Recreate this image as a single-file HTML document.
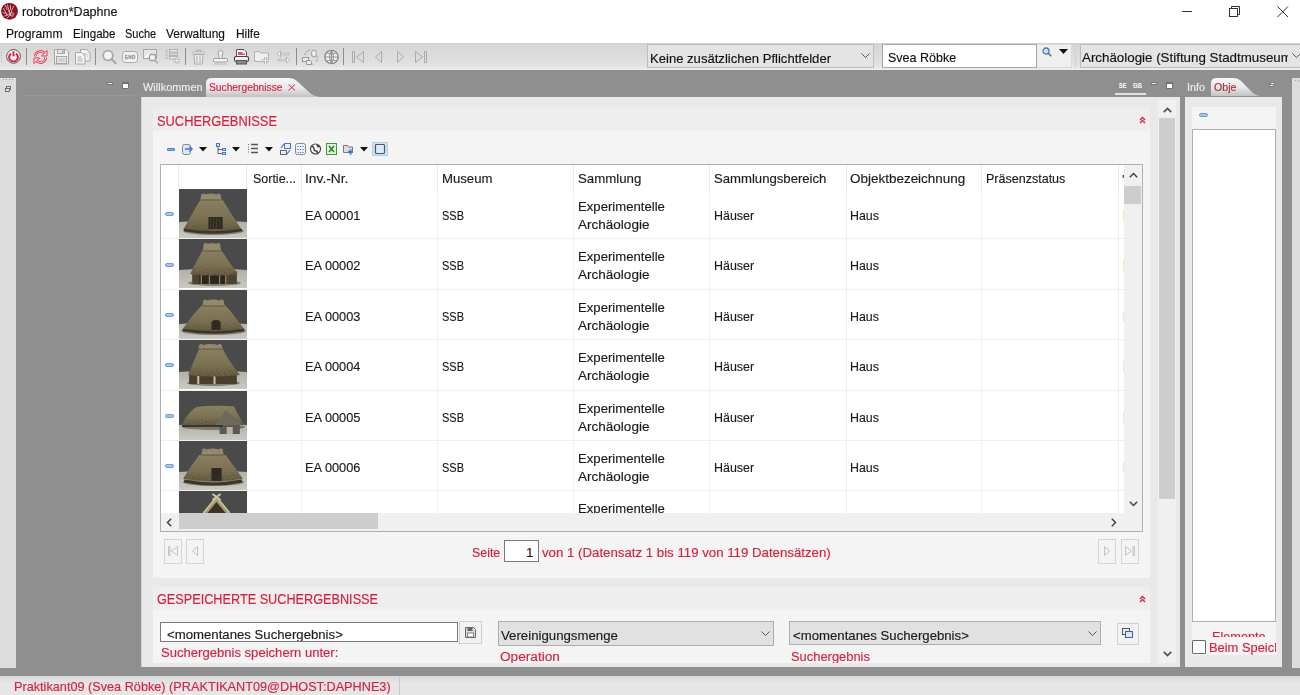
<!DOCTYPE html><html><head><meta charset="utf-8"><style>
html,body{margin:0;padding:0;}
body{width:1300px;height:695px;overflow:hidden;position:relative;background:#8f8f8f;font-family:"Liberation Sans",sans-serif;}
.t{position:absolute;white-space:nowrap;transform-origin:0 0;-webkit-text-stroke:0.15px currentColor;}
.b{position:absolute;box-sizing:border-box;}
svg.b{overflow:visible}
</style></head><body>
<div class="b" style="left:0px;top:0px;width:1300px;height:43px;background:#fff"></div>
<svg class="b" style="left:0px;top:0px;" width="20" height="20" viewBox="0 0 20 20"><circle cx="9.5" cy="11.3" r="8.4" fill="#8c1420"/><g stroke="#f1d8da" stroke-width=".9" fill="none" stroke-linecap="round" opacity=".85"><path d="M3.5 8.5l3 5.5M5.5 5.5l1.5 4M7.5 5l1 4.5 2 5M10.5 5.5v3.5l-2 3M13.5 6.5l-1.5 3-1 3.5M3 12.5q3 0 5 3M4.5 16q3-2 6-1.5M7 18q2-3 5-3M9.5 13.5q2-1 4-.5M12 17l2-3"/></g></svg>
<div class="t" style="left:21.5px;top:5.29px;font-size:12.5px;line-height:14.36px;color:#111;transform:scaleX(1.0031);">robotron*Daphne</div>
<div class="b" style="left:1182px;top:11px;width:10px;height:1px;background:#333"></div>
<svg class="b" style="left:1229px;top:6px;" width="12" height="12" viewBox="0 0 12 12"><rect x="0.5" y="2.5" width="8" height="8" fill="none" stroke="#333"/><path d="M2.5 2.5V0.5h8v8h-2" fill="none" stroke="#333"/></svg>
<svg class="b" style="left:1277px;top:6px;" width="12" height="12" viewBox="0 0 12 12"><path d="M0.5 0.5L11 11M11 0.5L0.5 11" stroke="#333" stroke-width="1"/></svg>
<div class="t" style="left:5.5px;top:27.85px;font-size:12.1px;line-height:13.90px;color:#111;transform:scaleX(1.0005);">Programm</div>
<div class="t" style="left:72.5px;top:27.85px;font-size:12.1px;line-height:13.90px;color:#111;transform:scaleX(0.9571);">Eingabe</div>
<div class="t" style="left:124.8px;top:27.85px;font-size:12.1px;line-height:13.90px;color:#111;transform:scaleX(0.9094);">Suche</div>
<div class="t" style="left:166.4px;top:27.85px;font-size:12.1px;line-height:13.90px;color:#111;transform:scaleX(0.9856);">Verwaltung</div>
<div class="t" style="left:236.2px;top:27.85px;font-size:12.1px;line-height:13.90px;color:#111;transform:scaleX(0.9832);">Hilfe</div>
<div class="b" style="left:0px;top:43px;width:1300px;height:27px;background:linear-gradient(#d0d0d0,#d6d6d6 8%,#e2e2e2 85%,#ececec 92%,#ececec)"></div>
<div class="b" style="left:1px;top:52px;width:1px;height:1px;background:#c2b48f"></div>
<div class="b" style="left:1px;top:55px;width:1px;height:1px;background:#c2b48f"></div>
<div class="b" style="left:1px;top:58px;width:1px;height:1px;background:#c2b48f"></div>
<div class="b" style="left:1px;top:61px;width:1px;height:1px;background:#c2b48f"></div>
<div class="b" style="left:26px;top:48px;width:1px;height:17px;background:#8c8c8c"></div>
<div class="b" style="left:95px;top:48px;width:1px;height:17px;background:#8c8c8c"></div>
<div class="b" style="left:185px;top:48px;width:1px;height:17px;background:#8c8c8c"></div>
<div class="b" style="left:296px;top:48px;width:1px;height:17px;background:#8c8c8c"></div>
<div class="b" style="left:343px;top:48px;width:1px;height:17px;background:#8c8c8c"></div>
<svg class="b" style="left:6px;top:49px;" width="16" height="16" viewBox="0 0 16 16"><circle cx="7.5" cy="7.4" r="6.9" fill="#f2f2f2" stroke="#5a5a5a" stroke-width="1"/><path d="M5 4.6a4.4 4.4 0 1 0 5 0" fill="none" stroke="#dc2440" stroke-width="2"/><path d="M7.5 2.3v5" stroke="#dc2440" stroke-width="2"/></svg>
<svg class="b" style="left:33px;top:49px;" width="15" height="16" viewBox="0 0 15 16"><g fill="none" stroke="#e23a55" stroke-width="2.6"><path d="M2.3 7.5a5.2 5.2 0 0 1 9-3.4M12.7 8.5a5.2 5.2 0 0 1-9 3.4"/></g><g fill="none" stroke="#fbe9ec" stroke-width="0.9"><path d="M2.3 7.5a5.2 5.2 0 0 1 9-3.4M12.7 8.5a5.2 5.2 0 0 1-9 3.4"/></g><path d="M14 1.5v5.5H8.5z" fill="#fbe9ec" stroke="#e23a55"/><path d="M1 14.5V9h5.5z" fill="#fbe9ec" stroke="#e23a55"/></svg>
<svg class="b" style="left:54px;top:49px;" width="15" height="16" viewBox="0 0 15 16"><path d="M0.5 0.5h11.5l2.5 2.5v12H0.5z" fill="#f0f0f0" stroke="#a3a3a3"/><rect x="3.5" y="0.5" width="7" height="4" fill="#e2e2e2" stroke="#a3a3a3"/><rect x="8" y="1.5" width="1.5" height="2" fill="#999"/><rect x="2.5" y="7.5" width="10" height="7" fill="#e8e8e8" stroke="#a3a3a3"/><path d="M4 10h7M4 12h7" stroke="#bbb"/></svg>
<svg class="b" style="left:75px;top:49px;" width="16" height="16" viewBox="0 0 16 16"><path d="M5.5 0.5h6l3.5 3.5v8h-9.5z" fill="#f2f2f2" stroke="#a8a8a8"/><path d="M0.5 3.5h6l3.5 3.5v8H0.5z" fill="#f4f4f4" stroke="#a8a8a8"/><path d="M2.5 8h4M2.5 10h5M2.5 12h5M8 5h4M12 7h1" stroke="#b0b0b0"/></svg>
<svg class="b" style="left:102px;top:49px;" width="15" height="16" viewBox="0 0 15 16"><circle cx="6" cy="6.5" r="4.8" fill="#f4f4f4" stroke="#a8a8a8" stroke-width="1.8"/><path d="M9.5 10l4 4" stroke="#a8a8a8" stroke-width="2.4" stroke-linecap="round"/></svg>
<svg class="b" style="left:122px;top:51px;" width="16" height="12" viewBox="0 0 16 12"><rect x="0.5" y="0.5" width="15" height="11" rx="3" fill="#f2f2f2" stroke="#a8a8a8"/><path d="M5.3 4.2h-1.8v3.6h1.8v-1.6h-1M7 7.8V4.2l2 3.6V4.2M10.7 4.2v3.6h1q1.3 0 1.3-1.8t-1.3-1.8z" fill="none" stroke="#888" stroke-width=".9"/></svg>
<svg class="b" style="left:143px;top:49px;" width="17" height="16" viewBox="0 0 17 16"><rect x="0.5" y="0.5" width="13" height="9" fill="#e6e6e6" stroke="#a8a8a8"/><path d="M1 9l5-5 3 3" fill="#fff" stroke="none"/><rect x="6.5" y="5.5" width="6" height="6" rx="1.5" fill="#f4f4f4" stroke="#a0a0a0" stroke-width="1.3"/><path d="M12 11.5l3 3" stroke="#a8a8a8" stroke-width="1.4"/></svg>
<svg class="b" style="left:165px;top:49px;" width="16" height="16" viewBox="0 0 16 16"><circle cx="1.5" cy="2" r="1" fill="#ddd" stroke="#aaa" stroke-width=".6"/><circle cx="1.5" cy="5.5" r="1" fill="#ddd" stroke="#aaa" stroke-width=".6"/><circle cx="1.5" cy="9" r="1" fill="#ddd" stroke="#aaa" stroke-width=".6"/><rect x="4.5" y="0.5" width="8" height="2.5" fill="#e8e8e8" stroke="#aaa" stroke-width=".8"/><rect x="4.5" y="4" width="8" height="2.5" fill="#d8d8d8" stroke="#aaa" stroke-width=".8"/><rect x="4.5" y="7.5" width="8" height="2.5" fill="#e8e8e8" stroke="#aaa" stroke-width=".8"/><path d="M12 8.5v6.5M8.5 11.7h7" stroke="#aaa" stroke-width="2.6"/><path d="M12 8.5v6.5M8.5 11.7h7" stroke="#f6f6f6" stroke-width="1"/></svg>
<svg class="b" style="left:192px;top:49px;" width="14" height="16" viewBox="0 0 14 16"><rect x="0.5" y="3" width="12" height="2" rx="1" fill="#eee" stroke="#aaa" stroke-width=".8"/><path d="M4.5 3V1.2h4V3" fill="none" stroke="#aaa"/><path d="M2 5.5h9l-0.8 9.5H2.8z" fill="#f0f0f0" stroke="#aaa"/><path d="M5 6.5v7.5M8 6.5v7.5" stroke="#aaa"/></svg>
<svg class="b" style="left:213px;top:49px;" width="15" height="16" viewBox="0 0 15 16"><path d="M5 4a2.5 2.5 0 1 1 5 0l-1 3v2.5h-3V7z" fill="#eee" stroke="#a0a0a0"/><rect x="0.5" y="9.5" width="14" height="3.5" rx="1" fill="#f2f2f2" stroke="#a0a0a0"/><path d="M1 15h13" stroke="#bbb"/></svg>
<svg class="b" style="left:234px;top:49px;" width="15" height="16" viewBox="0 0 15 16"><path d="M2.5 8V0.5h7.5l2.5 2.5V8" fill="#fafafa" stroke="#555"/><path d="M4 3h4l1 1.5H11V6H4z" fill="#e8506a"/><rect x="0.5" y="7.5" width="14" height="5" rx="1.5" fill="#f0f0f0" stroke="#444" stroke-width="1.2"/><rect x="2.5" y="11.5" width="10" height="3.5" fill="#8a8a8a" stroke="#555"/></svg>
<svg class="b" style="left:254px;top:49px;" width="16" height="16" viewBox="0 0 16 16"><path d="M0.5 2.5h5l1.5 1.5H14.5v8.5H0.5z" fill="#efefef" stroke="#b0b0b0"/><path d="M11.5 8v7M8 11.5h7" stroke="#aaa" stroke-width="2.6"/><path d="M11.5 8v7M8 11.5h7" stroke="#f6f6f6" stroke-width="1"/></svg>
<svg class="b" style="left:276px;top:49px;" width="15" height="16" viewBox="0 0 15 16"><path d="M4.5 2L1 5l3.5 3z M10.5 8L14 11l-3.5 3z" fill="#f2f2f2" stroke="#aaa" stroke-width=".8"/><path d="M4.5 4.2h8.5v1.6H4.5zM2 10.2h8.5v1.6H2z" fill="#eee" stroke="#aaa" stroke-width=".7"/></svg>
<svg class="b" style="left:302px;top:49px;" width="17" height="16" viewBox="0 0 17 16"><path d="M3 6a6 6 0 0 1 5-5M15 7a6 6 0 0 1-1 6M11 15a6 6 0 0 1-4 0" fill="none" stroke="#aaa" stroke-width="1.3" stroke-dasharray="2 1"/><rect x="0.5" y="8.5" width="6" height="4" fill="#eee" stroke="#999"/><path d="M4.5 11.5h4l1 1v3h-5z" fill="#eee" stroke="#999"/><ellipse cx="12" cy="4.5" rx="2.5" ry="3.5" fill="#eee" stroke="#999"/></svg>
<svg class="b" style="left:324px;top:49px;" width="15" height="16" viewBox="0 0 15 16"><circle cx="7.5" cy="8" r="6.6" fill="#f4f4f4" stroke="#8a8a8a" stroke-width="1.4"/><path d="M1 8h13M7.5 1.4v13.2M2.8 4q4.7 2.4 9.4 0M2.8 12q4.7-2.4 9.4 0M7.5 1.4q-4 6.6 0 13.2M7.5 1.4q4 6.6 0 13.2" fill="none" stroke="#8a8a8a" stroke-width=".9"/></svg>
<svg class="b" style="left:351px;top:49px;" width="14" height="16" viewBox="0 0 14 16"><path d="M1.5 2.5v11h2v-11z" fill="none" stroke="#aaa"/><path d="M12.5 2.5L5.5 8l7 5.5z" fill="none" stroke="#aaa"/></svg>
<svg class="b" style="left:374px;top:49px;" width="9" height="16" viewBox="0 0 9 16"><path d="M7.5 2.5L1.5 8l6 5.5z" fill="none" stroke="#aaa"/></svg>
<svg class="b" style="left:396px;top:49px;" width="9" height="16" viewBox="0 0 9 16"><path d="M1.5 2.5L7.5 8l-6 5.5z" fill="none" stroke="#aaa"/></svg>
<svg class="b" style="left:414px;top:49px;" width="14" height="16" viewBox="0 0 14 16"><path d="M1.5 2.5L8.5 8l-7 5.5z" fill="none" stroke="#aaa"/><path d="M10.5 2.5v11h2v-11z" fill="none" stroke="#aaa"/></svg>
<div class="b" style="left:647px;top:44px;width:227px;height:24px;background:#e4e4e4;border:1px solid #bdbdbd"></div>
<div class="t" style="left:650px;top:51.73px;font-size:13px;line-height:14.94px;color:#111;transform:scaleX(1.0060);">Keine zusätzlichen Pflichtfelder</div>
<svg class="b" style="left:861px;top:53px;" width="9" height="5" viewBox="0 0 9 5"><path d="M0.5 0.5l4 4 4-4" fill="none" stroke="#555" stroke-width="1"/></svg>
<div class="b" style="left:882px;top:44px;width:155px;height:24px;background:#fff;border:1px solid #a6a6a6"></div>
<div class="t" style="left:887.8px;top:50.84px;font-size:13px;line-height:14.94px;color:#111;transform:scaleX(0.9630);">Svea Röbke</div>
<div class="b" style="left:1037px;top:44px;width:35px;height:24px;background:#efefef;border:1px solid #dadada;border-left:0"></div>
<svg class="b" style="left:1042px;top:47px;" width="10" height="10" viewBox="0 0 10 10"><circle cx="4" cy="4" r="3" fill="#cfe0f5" stroke="#4a78b8" stroke-width="1.3"/><path d="M6.3 6.3l3 3" stroke="#666" stroke-width="1.5"/></svg>
<svg class="b" style="left:1059px;top:49px;" width="9" height="5" viewBox="0 0 9 5"><path d="M0 0h9L4.5 5z" fill="#111"/></svg>
<div class="b" style="left:1075px;top:44px;width:1px;height:24px;background:#d0d0d0"></div>
<div class="b" style="left:1080px;top:44px;width:230px;height:24px;background:#e4e4e4;border:1px solid #bdbdbd"></div>
<div class="b" style="left:1080px;top:44px;width:208px;height:24px;overflow:hidden">
<div class="t" style="left:2.4px;top:6.04px;font-size:13.1px;line-height:15.05px;color:#111;transform:scaleX(1.0191);">Archäologie (Stiftung Stadtmuseum</div>
</div>
<svg class="b" style="left:1292px;top:53px;" width="9" height="5" viewBox="0 0 9 5"><path d="M0.5 0.5l4 4 4-4" fill="none" stroke="#555" stroke-width="1"/></svg>
<div class="b" style="left:0px;top:78px;width:16px;height:590px;background:#dcdcdc"></div>
<div class="b" style="left:3px;top:79px;width:1px;height:1px;background:#a89f8a"></div>
<div class="b" style="left:6px;top:79px;width:1px;height:1px;background:#a89f8a"></div>
<div class="b" style="left:9px;top:79px;width:1px;height:1px;background:#a89f8a"></div>
<div class="b" style="left:12px;top:79px;width:1px;height:1px;background:#a89f8a"></div>
<svg class="b" style="left:5px;top:86px;" width="6" height="6" viewBox="0 0 6 6"><rect x="1.5" y="0.5" width="4" height="3" fill="#ddd" stroke="#555" stroke-width=".8"/><rect x="0.5" y="2.5" width="4" height="3" fill="#ddd" stroke="#555" stroke-width=".8"/></svg>
<div class="b" style="left:106.5px;top:81.5px;width:6.5px;height:3.5px;background:#f6f6f6;border:1px solid #6f6f6f;border-radius:1px"></div>
<div class="b" style="left:122px;top:81.5px;width:7px;height:7px;background:#fff;border:1px solid #6f6f6f;border-top:2px solid #6f6f6f;border-radius:1px"></div>
<div class="b" style="left:24px;top:95px;width:116px;height:1px;background:#979797"></div>
<div class="t" style="left:142.6px;top:80.84px;font-size:11px;line-height:12.64px;color:#eeeeee;transform:scaleX(0.9968);">Willkommen</div>
<svg class="b" style="left:206px;top:78px;" width="114" height="19" viewBox="0 0 114 19"><defs><linearGradient id="tg" x1="0" y1="0" x2="0" y2="1"><stop offset="0" stop-color="#f7f7f7"/><stop offset="0.55" stop-color="#e6e6e6"/><stop offset="1" stop-color="#c2c2c2"/></linearGradient></defs><path d="M0 19V5Q0 0 6 0H83Q88 0 92 4L104 15Q108 18.5 114 19Z" fill="url(#tg)"/></svg>
<div class="t" style="left:208.8px;top:81.05px;font-size:11px;line-height:12.64px;color:#d8203c;transform:scaleX(0.9318);">Suchergebnisse</div>
<svg class="b" style="left:288px;top:84px;" width="8" height="7" viewBox="0 0 8 7"><path d="M0.5 0.5l6.5 6M7 0.5l-6.5 6" stroke="#d8203c" stroke-width="1"/></svg>
<div class="t" style="left:1118.5px;top:82.21px;font-size:7.5px;line-height:8.62px;color:#f5f5f5;transform:scaleX(0.7496);font-weight:bold;">SE</div>
<div class="t" style="left:1133px;top:82.21px;font-size:7.5px;line-height:8.62px;color:#f5f5f5;transform:scaleX(0.8305);font-weight:bold;">GS</div>
<div class="b" style="left:1115px;top:93px;width:31px;height:2px;background:#e2e2e2"></div>
<div class="b" style="left:1150.5px;top:81.5px;width:6.5px;height:3.5px;background:#f6f6f6;border:1px solid #6f6f6f;border-radius:1px"></div>
<div class="b" style="left:1165.5px;top:81.5px;width:7px;height:7px;background:#fff;border:1px solid #6f6f6f;border-top:2px solid #6f6f6f;border-radius:1px"></div>
<div class="b" style="left:141px;top:97px;width:1039px;height:570px;background:#e9e9e9;border-left:1px solid #d4d4d4"></div>
<div class="b" style="left:153px;top:108px;width:997px;height:23px;background:#eeeeee"></div>
<div class="b" style="left:153px;top:131px;width:997px;height:447px;background:#f4f4f4"></div>
<div class="t" style="left:157px;top:111.92px;font-size:15px;line-height:17.23px;color:#d8203c;transform:scaleX(0.8569);">SUCHERGEBNISSE</div>
<svg class="b" style="left:1139px;top:116px;" width="7" height="8" viewBox="0 0 7 8"><path d="M1 4L3.5 1.5L6 4M1 7L3.5 4.5L6 7" fill="none" stroke="#d8203c" stroke-width="1.3"/></svg>
<div class="b" style="left:167px;top:148px;width:8px;height:3px;background:#8db3e6;border:1px solid #4a7fcb;border-radius:1px"></div>
<svg class="b" style="left:182px;top:143px;" width="11" height="12" viewBox="0 0 11 12"><rect x="0.5" y="1.5" width="8" height="10" rx="2" fill="#dde6f0" stroke="#7d8a99"/><path d="M3 6h7M7.5 3.5l2.5 2.5-2.5 2.5" fill="none" stroke="#3f7ad0" stroke-width="1.5"/></svg>
<svg class="b" style="left:199px;top:147px;" width="8" height="5" viewBox="0 0 8 5"><path d="M0 0h8L4 4.5z" fill="#111"/></svg>
<svg class="b" style="left:216px;top:143px;" width="10" height="12" viewBox="0 0 10 12"><rect x="0.5" y="0.5" width="3" height="3" fill="#cfe0f7" stroke="#3f7ad0"/><rect x="6.5" y="5.5" width="3" height="2" fill="#cfe0f7" stroke="#3f7ad0"/><rect x="6.5" y="9.5" width="3" height="2" fill="#cfe0f7" stroke="#3f7ad0"/><path d="M2 4v6.5h4.5M2 6.5h4.5" fill="none" stroke="#666"/></svg>
<svg class="b" style="left:232px;top:147px;" width="8" height="5" viewBox="0 0 8 5"><path d="M0 0h8L4 4.5z" fill="#111"/></svg>
<svg class="b" style="left:248px;top:143px;" width="10" height="12" viewBox="0 0 10 12"><path d="M0.5 1v10" stroke="#3f7ad0" stroke-dasharray="1 1.5"/><path d="M3 1.5h7M3 5.5h7M3 9.5h7" stroke="#555" stroke-width="1.3"/></svg>
<svg class="b" style="left:265px;top:147px;" width="8" height="5" viewBox="0 0 8 5"><path d="M0 0h8L4 4.5z" fill="#111"/></svg>
<svg class="b" style="left:280px;top:143px;" width="11" height="12" viewBox="0 0 11 12"><rect x="4.5" y="0.5" width="6" height="5" fill="#e5eefa" stroke="#3f7ad0"/><rect x="0.5" y="7.5" width="6" height="4" fill="#eee" stroke="#666"/><path d="M1 5l3-4M7 11l3-4" stroke="#3f7ad0" stroke-width="1.2"/></svg>
<svg class="b" style="left:295px;top:143px;" width="11" height="12" viewBox="0 0 11 12"><rect x="0.5" y="0.5" width="10" height="11" rx="2" fill="#f2f2f2" stroke="#888"/><path d="M3 3v1M5.5 3v1M8 3v1M3 6v1M5.5 6v1M8 6v1M3 9v1M5.5 9v1M8 9v1" stroke="#3f7ad0" stroke-width="1.3"/></svg>
<svg class="b" style="left:310px;top:143px;" width="11" height="12" viewBox="0 0 11 12"><circle cx="5.5" cy="6" r="5" fill="#fff" stroke="#444" stroke-width="1.2"/><path d="M2 3q2 1 2 3t2 2 1 3M7 1.5q0 2 2 2.5" fill="none" stroke="#444" stroke-width="1.5"/></svg>
<svg class="b" style="left:326px;top:143px;" width="11" height="12" viewBox="0 0 11 12"><rect x="0.5" y="0.5" width="10" height="11" fill="#e3f1df" stroke="#3a9a3a"/><path d="M3 3l5 6M8 3l-5 6" stroke="#2a8a2a" stroke-width="1.7"/></svg>
<svg class="b" style="left:343px;top:143px;" width="11" height="12" viewBox="0 0 11 12"><path d="M0.5 2.5h4l1 1.5h4v5.5h-9z" fill="#ddd" stroke="#777"/><path d="M7.5 6.5v5M5 9h5" stroke="#3f7ad0" stroke-width="2"/></svg>
<svg class="b" style="left:360px;top:147px;" width="8" height="5" viewBox="0 0 8 5"><path d="M0 0h8L4 4.5z" fill="#111"/></svg>
<div class="b" style="left:372px;top:142px;width:16px;height:14px;background:#cce4f7;border:1px solid #a8d0f0"></div>
<svg class="b" style="left:375px;top:144px;" width="10" height="10" viewBox="0 0 10 10"><rect x="0.5" y="0.5" width="9" height="9" rx="1" fill="#dbeafb" stroke="#555" stroke-width="1.2"/></svg>
<svg width="0" height="0" style="position:absolute"><defs><linearGradient id="thatch" x1="0" y1="0" x2="0" y2="1"><stop offset="0" stop-color="#8f8565"/><stop offset="0.6" stop-color="#7b6f51"/><stop offset="1" stop-color="#5a4f39"/></linearGradient><linearGradient id="gnd" x1="0" y1="0" x2="0" y2="1"><stop offset="0" stop-color="#b0afa6"/><stop offset="1" stop-color="#cacac2"/></linearGradient><filter id="nz" x="0" y="0" width="100%" height="100%"><feTurbulence type="fractalNoise" baseFrequency="0.8" numOctaves="2" seed="3" result="n"/><feColorMatrix in="n" type="matrix" values="0 0 0 0 0.2  0 0 0 0 0.18  0 0 0 0 0.1  0 0 0 2.2 -0.9" result="c"/><feComposite in="c" in2="SourceGraphic" operator="in" result="t"/><feMerge><feMergeNode in="SourceGraphic"/><feMergeNode in="t"/></feMerge></filter></defs></svg>
<div class="b" style="left:160px;top:164px;width:983px;height:368px;background:#fff;border:1px solid #a9b0ba"></div>
<div class="b" style="left:161px;top:165px;width:963px;height:348px;overflow:hidden">
<div class="b" style="left:17px;top:0px;width:1px;height:24px;background:#e9e9e9"></div>
<div class="b" style="left:85px;top:0px;width:1px;height:24px;background:#e9e9e9"></div>
<div class="b" style="left:140px;top:0px;width:1px;height:24px;background:#e9e9e9"></div>
<div class="b" style="left:276px;top:0px;width:1px;height:24px;background:#e9e9e9"></div>
<div class="b" style="left:412px;top:0px;width:1px;height:24px;background:#e9e9e9"></div>
<div class="b" style="left:548px;top:0px;width:1px;height:24px;background:#e9e9e9"></div>
<div class="b" style="left:685px;top:0px;width:1px;height:24px;background:#e9e9e9"></div>
<div class="b" style="left:820px;top:0px;width:1px;height:24px;background:#e9e9e9"></div>
<div class="b" style="left:957px;top:0px;width:1px;height:24px;background:#e9e9e9"></div>
<div class="t" style="left:92.4px;top:6.05px;font-size:13.2px;line-height:15.17px;color:#1a1a1a;transform:scaleX(0.9454);">Sortie...</div>
<div class="t" style="left:144px;top:6.05px;font-size:13.2px;line-height:15.17px;color:#1a1a1a;transform:scaleX(1.0467);">Inv.-Nr.</div>
<div class="t" style="left:280.5px;top:6.05px;font-size:13.2px;line-height:15.17px;color:#1a1a1a;transform:scaleX(0.9978);">Museum</div>
<div class="t" style="left:416.7px;top:6.05px;font-size:13.2px;line-height:15.17px;color:#1a1a1a;transform:scaleX(1.0033);">Sammlung</div>
<div class="t" style="left:553px;top:6.05px;font-size:13.2px;line-height:15.17px;color:#1a1a1a;transform:scaleX(0.9958);">Sammlungsbereich</div>
<div class="t" style="left:689px;top:6.05px;font-size:13.2px;line-height:15.17px;color:#1a1a1a;transform:scaleX(1.0212);">Objektbezeichnung</div>
<div class="t" style="left:825px;top:6.05px;font-size:13.2px;line-height:15.17px;color:#1a1a1a;transform:scaleX(0.9493);">Präsenzstatus</div>
<div class="t" style="left:961px;top:6.55px;font-size:13.2px;line-height:15.17px;color:#1a1a1a;">&#x27;</div>
<div class="b" style="left:0px;top:73px;width:963px;height:1px;background:#efefef"></div>
<div class="b" style="left:140px;top:24px;width:1px;height:49px;background:#f0f0f0"></div>
<div class="b" style="left:276px;top:24px;width:1px;height:49px;background:#f0f0f0"></div>
<div class="b" style="left:412px;top:24px;width:1px;height:49px;background:#f0f0f0"></div>
<div class="b" style="left:548px;top:24px;width:1px;height:49px;background:#f0f0f0"></div>
<div class="b" style="left:685px;top:24px;width:1px;height:49px;background:#f0f0f0"></div>
<div class="b" style="left:820px;top:24px;width:1px;height:49px;background:#f0f0f0"></div>
<div class="b" style="left:957px;top:24px;width:1px;height:49px;background:#f0f0f0"></div>
<svg class="b" style="left:18px;top:24px" width="68" height="49" viewBox="0 0 67 49" preserveAspectRatio="none"><rect width="67" height="49" fill="#4a4a4a"/><path d="M0 33Q33 30 67 33V49H0z" fill="url(#gnd)"/><ellipse cx="34" cy="42" rx="30" ry="4" fill="#3f3a30" opacity=".5"/><path d="M4 41C10 31 15 20 21 11Q32 9 43 11C49 20 55 31 62 41Q34 45 4 41Z" fill="url(#thatch)" filter="url(#nz)"/><path d="M21 11L22 5.5Q24 3.5 26 5.5Q31.5 3.5 37 5.5Q39 3.5 41 5.5L42 11Z" fill="#9a8f70" filter="url(#nz)"/><path d="M21 11H42" stroke="#5e5440" stroke-width="1"/><rect x="29" y="28" width="14" height="12" fill="#2f2a22"/><path d="M31 29v10M34 29v10M37 29v10M40 29v10" stroke="#4f4637" stroke-width=".7"/><path d="M5 41Q34 46 62 41" stroke="#3f3526" fill="none" stroke-width="2.5"/></svg>
<div class="b" style="left:4px;top:47px;width:9px;height:4px;background:#a6c6ef;border:1px solid #6a9ce0;border-radius:2px"></div>
<div class="t" style="left:144px;top:43.05px;font-size:13.2px;line-height:15.17px;color:#1a1a1a;transform:scaleX(0.9694);">EA 00001</div>
<div class="t" style="left:280.5px;top:43.05px;font-size:13.2px;line-height:15.17px;color:#1a1a1a;transform:scaleX(0.8329);">SSB</div>
<div class="t" style="left:416.7px;top:34.05px;font-size:13.2px;line-height:15.17px;color:#1a1a1a;transform:scaleX(0.9965);">Experimentelle</div>
<div class="t" style="left:416.7px;top:52.05px;font-size:13.2px;line-height:15.17px;color:#1a1a1a;transform:scaleX(1.0257);">Archäologie</div>
<div class="t" style="left:553px;top:43.05px;font-size:13.2px;line-height:15.17px;color:#1a1a1a;transform:scaleX(0.9448);">Häuser</div>
<div class="t" style="left:689px;top:43.05px;font-size:13.2px;line-height:15.17px;color:#1a1a1a;transform:scaleX(0.9411);">Haus</div>
<div class="b" style="left:962px;top:45px;width:1px;height:11px;background:#f9e2bb"></div>
<div class="b" style="left:0px;top:124px;width:963px;height:1px;background:#efefef"></div>
<div class="b" style="left:140px;top:74px;width:1px;height:50px;background:#f0f0f0"></div>
<div class="b" style="left:276px;top:74px;width:1px;height:50px;background:#f0f0f0"></div>
<div class="b" style="left:412px;top:74px;width:1px;height:50px;background:#f0f0f0"></div>
<div class="b" style="left:548px;top:74px;width:1px;height:50px;background:#f0f0f0"></div>
<div class="b" style="left:685px;top:74px;width:1px;height:50px;background:#f0f0f0"></div>
<div class="b" style="left:820px;top:74px;width:1px;height:50px;background:#f0f0f0"></div>
<div class="b" style="left:957px;top:74px;width:1px;height:50px;background:#f0f0f0"></div>
<svg class="b" style="left:18px;top:74px" width="68" height="49" viewBox="0 0 67 49" preserveAspectRatio="none"><rect width="67" height="49" fill="#4a4a4a"/><path d="M0 31Q33 28 67 31V49H0z" fill="url(#gnd)"/><ellipse cx="35" cy="44" rx="26" ry="3" fill="#3f3a30" opacity=".5"/><rect x="13" y="32" width="44" height="13" fill="#4f4232"/><path d="M20 34h26v11H20z" fill="#2c261e"/><path d="M22 34v11M30 34v11M40 34v11M46 34v11" stroke="#8a7d60" stroke-width="1.3"/><path d="M11 35C15 27 19 19 23 12Q32 10 42 12C47 19 52 27 58 35Q34 38 11 35Z" fill="url(#thatch)" filter="url(#nz)"/><path d="M23.5 12L24.5 5Q26.5 3 28.5 5Q32.5 3 36.5 5Q38.5 3 40.5 5L41.5 12Z" fill="#9a8f70" filter="url(#nz)"/><path d="M23.5 12H41.5" stroke="#5e5440" stroke-width="1"/></svg>
<div class="b" style="left:4px;top:98px;width:9px;height:4px;background:#a6c6ef;border:1px solid #6a9ce0;border-radius:2px"></div>
<div class="t" style="left:144px;top:93.45px;font-size:13.2px;line-height:15.17px;color:#1a1a1a;transform:scaleX(0.9694);">EA 00002</div>
<div class="t" style="left:280.5px;top:93.45px;font-size:13.2px;line-height:15.17px;color:#1a1a1a;transform:scaleX(0.8329);">SSB</div>
<div class="t" style="left:416.7px;top:84.45px;font-size:13.2px;line-height:15.17px;color:#1a1a1a;transform:scaleX(0.9965);">Experimentelle</div>
<div class="t" style="left:416.7px;top:102.45px;font-size:13.2px;line-height:15.17px;color:#1a1a1a;transform:scaleX(1.0257);">Archäologie</div>
<div class="t" style="left:553px;top:93.45px;font-size:13.2px;line-height:15.17px;color:#1a1a1a;transform:scaleX(0.9448);">Häuser</div>
<div class="t" style="left:689px;top:93.45px;font-size:13.2px;line-height:15.17px;color:#1a1a1a;transform:scaleX(0.9411);">Haus</div>
<div class="b" style="left:962px;top:95px;width:1px;height:11px;background:#f9e2bb"></div>
<div class="b" style="left:0px;top:174px;width:963px;height:1px;background:#efefef"></div>
<div class="b" style="left:140px;top:125px;width:1px;height:49px;background:#f0f0f0"></div>
<div class="b" style="left:276px;top:125px;width:1px;height:49px;background:#f0f0f0"></div>
<div class="b" style="left:412px;top:125px;width:1px;height:49px;background:#f0f0f0"></div>
<div class="b" style="left:548px;top:125px;width:1px;height:49px;background:#f0f0f0"></div>
<div class="b" style="left:685px;top:125px;width:1px;height:49px;background:#f0f0f0"></div>
<div class="b" style="left:820px;top:125px;width:1px;height:49px;background:#f0f0f0"></div>
<div class="b" style="left:957px;top:125px;width:1px;height:49px;background:#f0f0f0"></div>
<svg class="b" style="left:18px;top:125px" width="68" height="49" viewBox="0 0 67 49" preserveAspectRatio="none"><rect width="67" height="49" fill="#4a4a4a"/><path d="M0 34Q33 31 67 34V49H0z" fill="url(#gnd)"/><ellipse cx="34" cy="41" rx="32" ry="4" fill="#3f3a30" opacity=".5"/><path d="M3 40C9 31 16 22 22 16Q34 13 46 16C52 22 58 31 65 40Q34 43 3 40Z" fill="url(#thatch)" filter="url(#nz)"/><path d="M23 16L24 10.5Q26 8.5 28 10.5Q34.0 8.5 40 10.5Q42 8.5 44 10.5L45 16Z" fill="#9a8f70" filter="url(#nz)"/><path d="M23 16H45" stroke="#5e5440" stroke-width="1"/><path d="M32 40V33Q32 30 36.5 30Q41 30 41 33V40Z" fill="#2f2a22"/><path d="M4 40Q34 45 64 40" stroke="#3f3526" fill="none" stroke-width="2.5"/></svg>
<div class="b" style="left:4px;top:148px;width:9px;height:4px;background:#a6c6ef;border:1px solid #6a9ce0;border-radius:2px"></div>
<div class="t" style="left:144px;top:143.85px;font-size:13.2px;line-height:15.17px;color:#1a1a1a;transform:scaleX(0.9694);">EA 00003</div>
<div class="t" style="left:280.5px;top:143.85px;font-size:13.2px;line-height:15.17px;color:#1a1a1a;transform:scaleX(0.8329);">SSB</div>
<div class="t" style="left:416.7px;top:134.85px;font-size:13.2px;line-height:15.17px;color:#1a1a1a;transform:scaleX(0.9965);">Experimentelle</div>
<div class="t" style="left:416.7px;top:152.85px;font-size:13.2px;line-height:15.17px;color:#1a1a1a;transform:scaleX(1.0257);">Archäologie</div>
<div class="t" style="left:553px;top:143.85px;font-size:13.2px;line-height:15.17px;color:#1a1a1a;transform:scaleX(0.9448);">Häuser</div>
<div class="t" style="left:689px;top:143.85px;font-size:13.2px;line-height:15.17px;color:#1a1a1a;transform:scaleX(0.9411);">Haus</div>
<div class="b" style="left:962px;top:146px;width:1px;height:11px;background:#f9e2bb"></div>
<div class="b" style="left:0px;top:225px;width:963px;height:1px;background:#efefef"></div>
<div class="b" style="left:140px;top:175px;width:1px;height:50px;background:#f0f0f0"></div>
<div class="b" style="left:276px;top:175px;width:1px;height:50px;background:#f0f0f0"></div>
<div class="b" style="left:412px;top:175px;width:1px;height:50px;background:#f0f0f0"></div>
<div class="b" style="left:548px;top:175px;width:1px;height:50px;background:#f0f0f0"></div>
<div class="b" style="left:685px;top:175px;width:1px;height:50px;background:#f0f0f0"></div>
<div class="b" style="left:820px;top:175px;width:1px;height:50px;background:#f0f0f0"></div>
<div class="b" style="left:957px;top:175px;width:1px;height:50px;background:#f0f0f0"></div>
<svg class="b" style="left:18px;top:175px" width="68" height="49" viewBox="0 0 67 49" preserveAspectRatio="none"><rect width="67" height="49" fill="#4a4a4a"/><path d="M0 32Q33 29 67 32V49H0z" fill="url(#gnd)"/><ellipse cx="34" cy="43" rx="26" ry="3" fill="#3f3a30" opacity=".5"/><rect x="10" y="30" width="47" height="14" fill="#4a3e2e"/><path d="M19 30v14M35 30v14" stroke="#c8bfa6" stroke-width="2"/><path d="M9 35C13 26 16 17 20 9Q31 7 43 9C47 17 53 26 60 35Q34 38 9 35Z" fill="url(#thatch)" filter="url(#nz)"/><path d="M19 9L20 5Q22 3 24 5Q31.0 3 38 5Q40 3 42 5L43 9Z" fill="#9a8f70" filter="url(#nz)"/><path d="M19 9H43" stroke="#5e5440" stroke-width="1"/></svg>
<div class="b" style="left:4px;top:198px;width:9px;height:4px;background:#a6c6ef;border:1px solid #6a9ce0;border-radius:2px"></div>
<div class="t" style="left:144px;top:194.25px;font-size:13.2px;line-height:15.17px;color:#1a1a1a;transform:scaleX(0.9694);">EA 00004</div>
<div class="t" style="left:280.5px;top:194.25px;font-size:13.2px;line-height:15.17px;color:#1a1a1a;transform:scaleX(0.8329);">SSB</div>
<div class="t" style="left:416.7px;top:185.25px;font-size:13.2px;line-height:15.17px;color:#1a1a1a;transform:scaleX(0.9965);">Experimentelle</div>
<div class="t" style="left:416.7px;top:203.25px;font-size:13.2px;line-height:15.17px;color:#1a1a1a;transform:scaleX(1.0257);">Archäologie</div>
<div class="t" style="left:553px;top:194.25px;font-size:13.2px;line-height:15.17px;color:#1a1a1a;transform:scaleX(0.9448);">Häuser</div>
<div class="t" style="left:689px;top:194.25px;font-size:13.2px;line-height:15.17px;color:#1a1a1a;transform:scaleX(0.9411);">Haus</div>
<div class="b" style="left:962px;top:196px;width:1px;height:11px;background:#f9e2bb"></div>
<div class="b" style="left:0px;top:275px;width:963px;height:1px;background:#efefef"></div>
<div class="b" style="left:140px;top:226px;width:1px;height:49px;background:#f0f0f0"></div>
<div class="b" style="left:276px;top:226px;width:1px;height:49px;background:#f0f0f0"></div>
<div class="b" style="left:412px;top:226px;width:1px;height:49px;background:#f0f0f0"></div>
<div class="b" style="left:548px;top:226px;width:1px;height:49px;background:#f0f0f0"></div>
<div class="b" style="left:685px;top:226px;width:1px;height:49px;background:#f0f0f0"></div>
<div class="b" style="left:820px;top:226px;width:1px;height:49px;background:#f0f0f0"></div>
<div class="b" style="left:957px;top:226px;width:1px;height:49px;background:#f0f0f0"></div>
<svg class="b" style="left:18px;top:226px" width="68" height="49" viewBox="0 0 67 49" preserveAspectRatio="none"><rect width="67" height="49" fill="#4a4a4a"/><path d="M0 34Q33 31 67 34V49H0z" fill="url(#gnd)"/><ellipse cx="34" cy="36" rx="31" ry="3" fill="#3f3a30" opacity=".5"/><path d="M3 34C6 27 11 20 17 16Q34 14 54 15.5L64 34Z" fill="url(#thatch)" filter="url(#nz)"/><path d="M36 34L46 19L62 34z" fill="#6d6a5c"/><path d="M40 34v9h20v-9z" fill="#5a5a50"/><path d="M47 36h6v7h-6z" fill="#b9b2a0"/><path d="M3 35h40" stroke="#3f3526" fill="none" stroke-width="2"/></svg>
<div class="b" style="left:4px;top:249px;width:9px;height:4px;background:#a6c6ef;border:1px solid #6a9ce0;border-radius:2px"></div>
<div class="t" style="left:144px;top:244.65px;font-size:13.2px;line-height:15.17px;color:#1a1a1a;transform:scaleX(0.9694);">EA 00005</div>
<div class="t" style="left:280.5px;top:244.65px;font-size:13.2px;line-height:15.17px;color:#1a1a1a;transform:scaleX(0.8329);">SSB</div>
<div class="t" style="left:416.7px;top:235.65px;font-size:13.2px;line-height:15.17px;color:#1a1a1a;transform:scaleX(0.9965);">Experimentelle</div>
<div class="t" style="left:416.7px;top:253.65px;font-size:13.2px;line-height:15.17px;color:#1a1a1a;transform:scaleX(1.0257);">Archäologie</div>
<div class="t" style="left:553px;top:244.65px;font-size:13.2px;line-height:15.17px;color:#1a1a1a;transform:scaleX(0.9448);">Häuser</div>
<div class="t" style="left:689px;top:244.65px;font-size:13.2px;line-height:15.17px;color:#1a1a1a;transform:scaleX(0.9411);">Haus</div>
<div class="b" style="left:962px;top:247px;width:1px;height:11px;background:#f9e2bb"></div>
<div class="b" style="left:0px;top:325px;width:963px;height:1px;background:#efefef"></div>
<div class="b" style="left:140px;top:276px;width:1px;height:49px;background:#f0f0f0"></div>
<div class="b" style="left:276px;top:276px;width:1px;height:49px;background:#f0f0f0"></div>
<div class="b" style="left:412px;top:276px;width:1px;height:49px;background:#f0f0f0"></div>
<div class="b" style="left:548px;top:276px;width:1px;height:49px;background:#f0f0f0"></div>
<div class="b" style="left:685px;top:276px;width:1px;height:49px;background:#f0f0f0"></div>
<div class="b" style="left:820px;top:276px;width:1px;height:49px;background:#f0f0f0"></div>
<div class="b" style="left:957px;top:276px;width:1px;height:49px;background:#f0f0f0"></div>
<svg class="b" style="left:18px;top:276px" width="68" height="49" viewBox="0 0 67 49" preserveAspectRatio="none"><rect width="67" height="49" fill="#4a4a4a"/><path d="M0 31Q33 28 67 31V49H0z" fill="url(#gnd)"/><ellipse cx="34" cy="41" rx="30" ry="4" fill="#3f3a30" opacity=".5"/><path d="M4 38C9 29 15 21 20 14Q33 12 46 14C51 21 57 29 63 38Q34 42 4 38Z" fill="url(#thatch)" filter="url(#nz)"/><path d="M22 14L23 8.5Q25 6.5 27 8.5Q33.0 6.5 39 8.5Q41 6.5 43 8.5L44 14Z" fill="#9a8f70" filter="url(#nz)"/><path d="M22 14H44" stroke="#5e5440" stroke-width="1"/><rect x="32" y="27" width="10" height="13" fill="#2f2a22"/><path d="M5 40Q34 46 62 40" stroke="#3f3526" fill="none" stroke-width="3"/></svg>
<div class="b" style="left:4px;top:299px;width:9px;height:4px;background:#a6c6ef;border:1px solid #6a9ce0;border-radius:2px"></div>
<div class="t" style="left:144px;top:295.05px;font-size:13.2px;line-height:15.17px;color:#1a1a1a;transform:scaleX(0.9694);">EA 00006</div>
<div class="t" style="left:280.5px;top:295.05px;font-size:13.2px;line-height:15.17px;color:#1a1a1a;transform:scaleX(0.8329);">SSB</div>
<div class="t" style="left:416.7px;top:286.05px;font-size:13.2px;line-height:15.17px;color:#1a1a1a;transform:scaleX(0.9965);">Experimentelle</div>
<div class="t" style="left:416.7px;top:304.05px;font-size:13.2px;line-height:15.17px;color:#1a1a1a;transform:scaleX(1.0257);">Archäologie</div>
<div class="t" style="left:553px;top:295.05px;font-size:13.2px;line-height:15.17px;color:#1a1a1a;transform:scaleX(0.9448);">Häuser</div>
<div class="t" style="left:689px;top:295.05px;font-size:13.2px;line-height:15.17px;color:#1a1a1a;transform:scaleX(0.9411);">Haus</div>
<div class="b" style="left:962px;top:297px;width:1px;height:11px;background:#f9e2bb"></div>
<div class="b" style="left:0px;top:376px;width:963px;height:1px;background:#efefef"></div>
<div class="b" style="left:140px;top:326px;width:1px;height:50px;background:#f0f0f0"></div>
<div class="b" style="left:276px;top:326px;width:1px;height:50px;background:#f0f0f0"></div>
<div class="b" style="left:412px;top:326px;width:1px;height:50px;background:#f0f0f0"></div>
<div class="b" style="left:548px;top:326px;width:1px;height:50px;background:#f0f0f0"></div>
<div class="b" style="left:685px;top:326px;width:1px;height:50px;background:#f0f0f0"></div>
<div class="b" style="left:820px;top:326px;width:1px;height:50px;background:#f0f0f0"></div>
<div class="b" style="left:957px;top:326px;width:1px;height:50px;background:#f0f0f0"></div>
<svg class="b" style="left:18px;top:326px" width="68" height="49" viewBox="0 0 67 49" preserveAspectRatio="none"><rect width="67" height="49" fill="#4a4a4a"/><path d="M0 61Q33 58 67 61V49H0z" fill="url(#gnd)"/><path d="M24 22L37 6L50 22Z" fill="#a8996f"/><path d="M28 22L37 11L46 22Z" fill="#3a3326"/><path d="M33 3l8 6M41 3l-8 6" stroke="#cdc3a3" stroke-width="2"/><path d="M24 22L37 6L50 22" fill="none" stroke="#cdc3a3" stroke-width="1.6"/></svg>
<div class="t" style="left:416.7px;top:336.45px;font-size:13.2px;line-height:15.17px;color:#1a1a1a;transform:scaleX(0.9965);">Experimentelle</div>
</div>
<div class="b" style="left:1124px;top:165px;width:18px;height:348px;background:#f0f0f0"></div>
<svg class="b" style="left:1129px;top:172px;" width="9" height="6" viewBox="0 0 9 6"><path d="M0.8 5.2l3.7-3.7 3.7 3.7" fill="none" stroke="#444" stroke-width="1.5"/></svg>
<div class="b" style="left:1124px;top:186px;width:17px;height:18px;background:#cdcdcd"></div>
<svg class="b" style="left:1129px;top:501px;" width="9" height="6" viewBox="0 0 9 6"><path d="M0.8 0.8l3.7 3.7 3.7-3.7" fill="none" stroke="#444" stroke-width="1.5"/></svg>
<div class="b" style="left:161px;top:513px;width:963px;height:18px;background:#f0f0f0"></div>
<div class="b" style="left:1124px;top:513px;width:18px;height:18px;background:#f0f0f0"></div>
<svg class="b" style="left:166px;top:518px;" width="6" height="9" viewBox="0 0 6 9"><path d="M5.2 0.8L1.5 4.5l3.7 3.7" fill="none" stroke="#444" stroke-width="1.5"/></svg>
<div class="b" style="left:179px;top:513px;width:199px;height:16px;background:#cdcdcd"></div>
<svg class="b" style="left:1111px;top:518px;" width="6" height="9" viewBox="0 0 6 9"><path d="M0.8 0.8l3.7 3.7-3.7 3.7" fill="none" stroke="#444" stroke-width="1.5"/></svg>
<div class="b" style="left:164px;top:539px;width:18px;height:25px;border:1px solid #d4d4d4;background:#f4f4f4"></div>
<svg class="b" style="left:168px;top:546px;" width="10" height="10" viewBox="0 0 10 10"><path d="M0.5 0.5v9h1.5v-9z M9.5 0.5L3.5 5l6 4.5z" fill="none" stroke="#c2c2c2"/></svg>
<div class="b" style="left:186px;top:539px;width:18px;height:25px;border:1px solid #d4d4d4;background:#f4f4f4"></div>
<svg class="b" style="left:192px;top:546px;" width="6" height="10" viewBox="0 0 6 10"><path d="M5.5 0.5L0.5 5l5 4.5z" fill="none" stroke="#c2c2c2"/></svg>
<div class="b" style="left:1098px;top:539px;width:18px;height:25px;border:1px solid #d4d4d4;background:#f4f4f4"></div>
<svg class="b" style="left:1104px;top:546px;" width="6" height="10" viewBox="0 0 6 10"><path d="M0.5 0.5L5.5 5l-5 4.5z" fill="none" stroke="#c2c2c2"/></svg>
<div class="b" style="left:1121px;top:539px;width:18px;height:25px;border:1px solid #d4d4d4;background:#f4f4f4"></div>
<svg class="b" style="left:1125px;top:546px;" width="10" height="10" viewBox="0 0 10 10"><path d="M0.5 0.5L6.5 5l-6 4.5z M8 0.5v9h1.5v-9z" fill="none" stroke="#c2c2c2"/></svg>
<div class="t" style="left:471.7px;top:545.05px;font-size:13.2px;line-height:15.17px;color:#d8203c;transform:scaleX(0.9406);">Seite</div>
<div class="b" style="left:504px;top:540px;width:35px;height:22px;background:#fff;border:1px solid #7a7a7a"></div>
<div class="t" style="left:526px;top:545.05px;font-size:13.2px;line-height:15.17px;color:#1a1a1a;">1</div>
<div class="t" style="left:542px;top:545.05px;font-size:13.2px;line-height:15.17px;color:#d8203c;transform:scaleX(1.0039);">von 1 (Datensatz 1 bis 119 von 119 Datensätzen)</div>
<div class="b" style="left:153px;top:587px;width:997px;height:23px;background:#eeeeee"></div>
<div class="b" style="left:153px;top:610px;width:997px;height:53px;background:#f4f4f4"></div>
<div class="t" style="left:157px;top:590.22px;font-size:15px;line-height:17.23px;color:#d8203c;transform:scaleX(0.8453);">GESPEICHERTE SUCHERGEBNISSE</div>
<svg class="b" style="left:1139px;top:595px;" width="7" height="8" viewBox="0 0 7 8"><path d="M1 4L3.5 1.5L6 4M1 7L3.5 4.5L6 7" fill="none" stroke="#d8203c" stroke-width="1.3"/></svg>
<div class="b" style="left:153px;top:610px;width:997px;height:53px;overflow:hidden">
<div class="b" style="left:7px;top:12px;width:298px;height:20px;background:#fff;border:1px solid #7a7a7a;overflow:hidden">
<div class="t" style="left:6px;top:4.05px;font-size:13.2px;line-height:15.17px;color:#1a1a1a;transform:scaleX(0.9994);">&lt;momentanes Suchergebnis&gt;</div>
</div>
<div class="b" style="left:306px;top:11px;width:23px;height:23px;background:#f2f2f2;border:1px solid #d0d0d0"></div>
<svg class="b" style="left:312px;top:17px;" width="11" height="11" viewBox="0 0 11 11"><path d="M0.5 0.5h8l2 2v8h-10z" fill="#ddd" stroke="#666"/><rect x="2.5" y="1" width="5" height="3" fill="#666"/><rect x="2.5" y="6" width="6" height="4" fill="#fff" stroke="#666" stroke-width=".8"/></svg>
<div class="t" style="left:8px;top:35.05px;font-size:13.2px;line-height:15.17px;color:#d8203c;transform:scaleX(0.9914);">Suchergebnis speichern unter:</div>
<div class="b" style="left:345px;top:11px;width:276px;height:25px;background:#e1e1e1;border:1px solid #adadad"></div>
<div class="t" style="left:348px;top:18.05px;font-size:13.2px;line-height:15.17px;color:#1a1a1a;transform:scaleX(1.0028);">Vereinigungsmenge</div>
<svg class="b" style="left:608px;top:21px;" width="9" height="5" viewBox="0 0 9 5"><path d="M0.5 0.5l4 4 4-4" fill="none" stroke="#555"/></svg>
<div class="t" style="left:346.5px;top:39.05px;font-size:13.2px;line-height:15.17px;color:#d8203c;transform:scaleX(1.0351);">Operation</div>
<div class="b" style="left:636px;top:11px;width:312px;height:24px;background:#e1e1e1;border:1px solid #adadad"></div>
<div class="t" style="left:640px;top:18.05px;font-size:13.2px;line-height:15.17px;color:#1a1a1a;transform:scaleX(0.9994);">&lt;momentanes Suchergebnis&gt;</div>
<svg class="b" style="left:935px;top:21px;" width="9" height="5" viewBox="0 0 9 5"><path d="M0.5 0.5l4 4 4-4" fill="none" stroke="#555"/></svg>
<div class="t" style="left:638px;top:38.65px;font-size:13.2px;line-height:15.17px;color:#d8203c;transform:scaleX(0.9787);">Suchergebnis</div>
<div class="b" style="left:964px;top:13px;width:22px;height:22px;background:#f2f2f2;border:1px solid #d0d0d0"></div>
<svg class="b" style="left:969px;top:18px;" width="12" height="12" viewBox="0 0 12 12"><rect x="0.5" y="0.5" width="7" height="6" fill="#eee" stroke="#555"/><rect x="3.5" y="3.5" width="7" height="6" fill="#dde8f7" stroke="#3f5f9f"/></svg>
</div>
<div class="b" style="left:1158px;top:100px;width:18px;height:563px;background:#f0f0f0"></div>
<svg class="b" style="left:1163px;top:107px;" width="9" height="6" viewBox="0 0 9 6"><path d="M0.8 5.2L4.5 1.5L8.2 5.2" fill="none" stroke="#505050" stroke-width="1.7"/></svg>
<div class="b" style="left:1159px;top:118px;width:16px;height:381px;background:#cdcdcd"></div>
<svg class="b" style="left:1163px;top:651px;" width="9" height="6" viewBox="0 0 9 6"><path d="M0.8 0.8L4.5 4.5L8.2 0.8" fill="none" stroke="#505050" stroke-width="1.7"/></svg>
<div class="t" style="left:1186.6px;top:81.05px;font-size:11px;line-height:12.64px;color:#eeeeee;transform:scaleX(0.9811);">Info</div>
<svg class="b" style="left:1211px;top:78px;" width="49" height="18" viewBox="0 0 49 18"><defs><linearGradient id="tg2" x1="0" y1="0" x2="0" y2="1"><stop offset="0" stop-color="#f7f7f7"/><stop offset="0.55" stop-color="#e6e6e6"/><stop offset="1" stop-color="#c2c2c2"/></linearGradient></defs><path d="M0 18V5Q0 0 6 0H22Q28 0 32 5L42 15Q45 17.5 49 18Z" fill="url(#tg2)"/></svg>
<div class="t" style="left:1213.5px;top:81.05px;font-size:11px;line-height:12.64px;color:#a33030;transform:scaleX(0.9684);">Obje</div>
<svg class="b" style="left:1269px;top:82px;" width="6" height="5" viewBox="0 0 6 5"><rect x="1.5" y="0.5" width="4" height="2" fill="#f3f3f3" stroke="#666" stroke-width=".7"/><rect x="0.5" y="2.5" width="4" height="2" fill="#f3f3f3" stroke="#666" stroke-width=".7"/></svg>
<div class="b" style="left:1185px;top:97px;width:97px;height:570px;background:#e9e9e9"></div>
<div class="b" style="left:1192px;top:107px;width:84px;height:548px;background:#f4f4f4"></div>
<div class="b" style="left:1199px;top:113px;width:9px;height:4px;background:#a6c6ef;border:1px solid #6a9ce0;border-radius:2px"></div>
<div class="b" style="left:1192px;top:129px;width:84px;height:493px;background:#fff;border:1px solid #a9b0ba"></div>
<div class="b" style="left:1192px;top:622px;width:84px;height:15px;overflow:hidden">
<div class="t" style="left:20px;top:7.05px;font-size:13.2px;line-height:15.17px;color:#d8203c;transform:scaleX(0.9612);">Elemente</div>
</div>
<div class="b" style="left:1192px;top:640px;width:14px;height:14px;background:#fff;border:1px solid #6a6a6a;border-radius:1px"></div>
<div class="b" style="left:1208px;top:630px;width:68px;height:30px;overflow:hidden">
<div class="t" style="left:0.5px;top:10.45px;font-size:13.2px;line-height:15.17px;color:#d8203c;transform:scaleX(0.9767);">Beim Speichern</div>
</div>
<div class="b" style="left:1292px;top:78px;width:8px;height:590px;background:#dcdcdc"></div>
<div class="b" style="left:1295px;top:80px;width:1px;height:1px;background:#a89f8a"></div>
<div class="b" style="left:1298px;top:80px;width:1px;height:1px;background:#a89f8a"></div>
<div class="b" style="left:0px;top:676px;width:1300px;height:19px;background:linear-gradient(#d8d8d8,#e6e6e6 40%,#e6e6e6)"></div>
<div class="t" style="left:14px;top:680.31px;font-size:12.7px;line-height:14.59px;color:#d8203c;transform:scaleX(0.9998);">Praktikant09 (Svea Röbke) (PRAKTIKANT09@DHOST:DAPHNE3)</div>
<div class="b" style="left:399px;top:677px;width:1px;height:18px;background:#c8c8c8"></div>
</body></html>
